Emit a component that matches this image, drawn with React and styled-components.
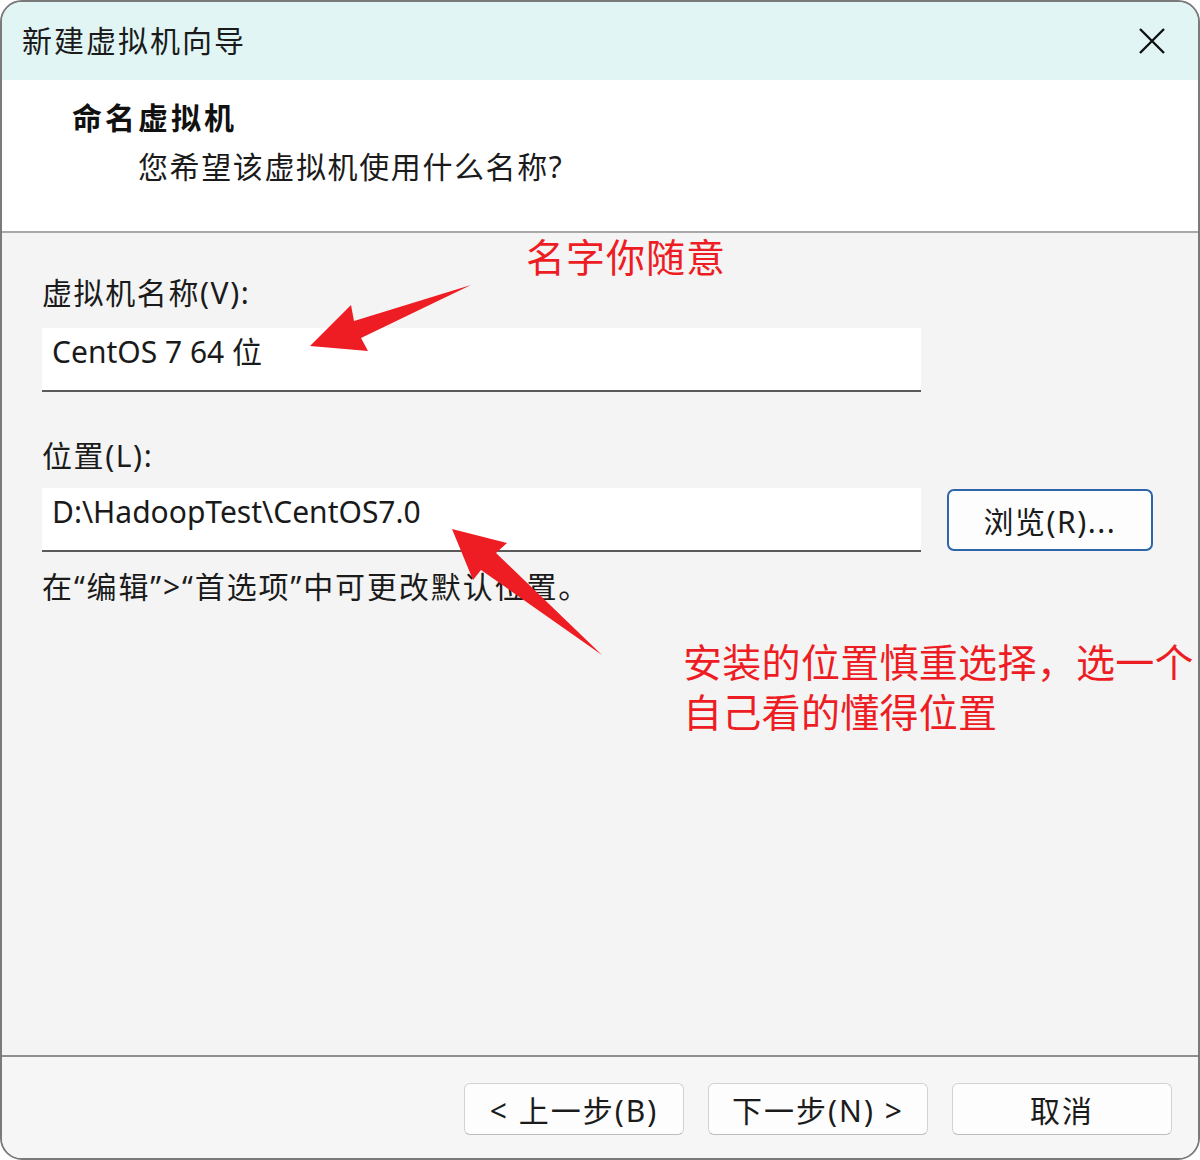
import React from "react";
import styled, { createGlobalStyle } from "styled-components";

const Global = createGlobalStyle`
  html, body { margin: 0; padding: 0; background: #ffffff; }
  body { font-family: "Noto Sans", "Noto Sans CJK SC", sans-serif; color: #1a1a1a; }
  * { box-sizing: border-box; }
`;

const Window = styled.div`
  position: relative;
  width: 1200px;
  height: 1160px;
  border: 2px solid #7a7a7a;
  border-radius: 22px;
  overflow: hidden;
  display: flex;
  flex-direction: column;
  background: #f4f4f4;
  font-family: "Noto Sans", "Noto Sans CJK SC", sans-serif;
`;

const TitleBar = styled.div`
  height: 78px;
  flex: none;
  display: flex;
  align-items: center;
  justify-content: space-between;
  padding: 0 33px 0 20px;
  background: #e1f6f4;
`;

const Title = styled.div`
  font-size: 30px;
  line-height: 40px;
  letter-spacing: 2px;
  color: #1b1b1b;
`;

const CloseButton = styled.div`
  width: 26px;
  height: 26px;
  display: flex;
  align-items: center;
  justify-content: center;
`;

const Header = styled.div`
  height: 151px;
  flex: none;
  background: #ffffff;
  padding-top: 18px;
`;

const HeaderTitle = styled.div`
  padding-left: 70px;
  font-size: 30px;
  line-height: 40px;
  font-weight: 700;
  letter-spacing: 3px;
  color: #111;
`;

const HeaderSub = styled.div`
  margin-top: 9px;
  padding-left: 136px;
  font-size: 30px;
  line-height: 40px;
  letter-spacing: 1.6px;
  color: #1b1b1b;
`;

const Separator = styled.div`
  height: 2px;
  flex: none;
  background: ${(p) => p.$color || "#a9a9a9"};
`;

const Content = styled.div`
  flex: 1;
  padding: 40px 0 0 40px;
  background: #f4f4f4;
`;

const Label = styled.div`
  font-size: 30px;
  line-height: 40px;
  letter-spacing: 1.6px;
  color: #1b1b1b;
  margin-top: ${(p) => p.$top || 0}px;
`;

const FieldRow = styled.div`
  display: flex;
  align-items: flex-start;
  gap: 26px;
  margin-top: ${(p) => p.$top || 14}px;
`;

const TextField = styled.div`
  width: 879px;
  height: 64px;
  background: #ffffff;
  border-bottom: 2px solid #5a5a5a;
  padding: 4px 10px 0;
  font-size: 30px;
  line-height: 40px;
  color: #1a1a1a;
  white-space: nowrap;
`;

const BrowseButton = styled.div`
  width: 206px;
  height: 62px;
  margin-top: 1px;
  border: 2px solid #2e64a8;
  border-radius: 7px;
  background: #fdfdfd;
  display: flex;
  align-items: center;
  justify-content: center;
  font-size: 30px;
  letter-spacing: 1.5px;
  color: #1b1b1b;
`;

const Hint = styled.div`
  margin-top: 15px;
  font-size: 30px;
  line-height: 40px;
  letter-spacing: 1.9px;
  color: #1b1b1b;
`;

const Footer = styled.div`
  height: 101px;
  flex: none;
  background: #f6f6f6;
  display: flex;
  justify-content: flex-end;
  align-items: flex-start;
  gap: 24px;
  padding: 26px 26px 0 0;
`;

const WizardButton = styled.div`
  width: 220px;
  height: 52px;
  background: #fdfdfd;
  border: 1px solid #d2d2d2;
  border-bottom-color: #bdbdbd;
  border-radius: 6px;
  display: flex;
  align-items: center;
  justify-content: center;
  font-size: 30px;
  letter-spacing: 2px;
  color: #1b1b1b;
`;

const Overlay = styled.div`
  position: absolute;
  inset: 0;
  pointer-events: none;
`;

const Note = styled.div`
  position: absolute;
  left: ${(p) => p.$x}px;
  top: ${(p) => p.$y}px;
  color: #ee1d24;
  font-family: "Noto Sans CJK SC", sans-serif;
  font-size: 39px;
  line-height: 44px;
  letter-spacing: ${(p) => p.$ls || 0}px;
  white-space: nowrap;
`;

const ArrowLayer = styled.svg`
  position: absolute;
  left: 0;
  top: 0;
`;

export default function App() {
  return (
    <>
      <Global />
      <Window>
        <TitleBar>
          <Title>新建虚拟机向导</Title>
          <CloseButton>
            <svg width="26" height="26" viewBox="0 0 26 26">
              <path d="M1 1 L25 25 M25 1 L1 25" stroke="#111" strokeWidth="2.4" fill="none" />
            </svg>
          </CloseButton>
        </TitleBar>
        <Header>
          <HeaderTitle>命名虚拟机</HeaderTitle>
          <HeaderSub>您希望该虚拟机使用什么名称?</HeaderSub>
        </Header>
        <Separator $color="#a9a9a9" />
        <Content>
          <Label>虚拟机名称(V):</Label>
          <FieldRow $top={15}>
            <TextField>CentOS 7 64 位</TextField>
          </FieldRow>
          <Label $top={44}>位置(L):</Label>
          <FieldRow $top={12}>
            <TextField>D:\HadoopTest\CentOS7.0</TextField>
            <BrowseButton>浏览(R)...</BrowseButton>
          </FieldRow>
          <Hint>在“编辑”&gt;“首选项”中可更改默认位置。</Hint>
        </Content>
        <Separator $color="#8e8e8e" />
        <Footer>
          <WizardButton>&lt; 上一步(B)</WizardButton>
          <WizardButton>下一步(N) &gt;</WizardButton>
          <WizardButton>取消</WizardButton>
        </Footer>
        <Overlay>
          <Note $x={524} $y={231} $ls={1}>名字你随意</Note>
          <Note $x={681} $y={636} $ls={0.3}>安装的位置慎重选择，选一个</Note>
          <Note $x={681} $y={686} $ls={0.3}>自己看的懂得位置</Note>
          <ArrowLayer width="1196" height="1156" viewBox="2 2 1196 1156">
            <polygon points="310,346 351,305 354,321 471,285 361,338 368,351" fill="#ee1d24" />
            <polygon points="452,529 507,543 496,553 602,655 481,570 473,580" fill="#ee1d24" />
          </ArrowLayer>
        </Overlay>
      </Window>
    </>
  );
}
